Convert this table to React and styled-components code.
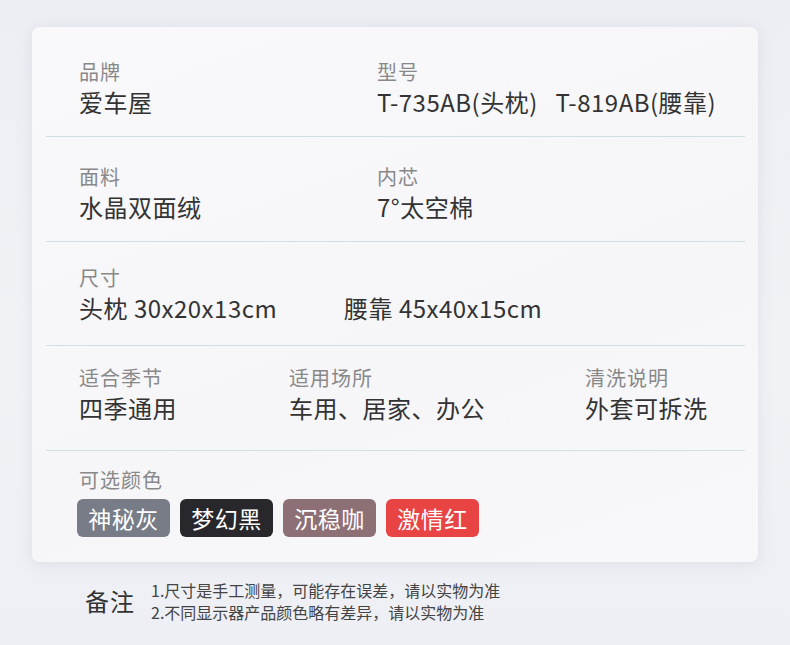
import React from 'react';
import styled, { createGlobalStyle } from 'styled-components';

const GlobalStyle = createGlobalStyle`
  html, body {
    margin: 0;
    padding: 0;
    width: 790px;
    height: 645px;
    overflow: hidden;
    background: linear-gradient(180deg, #eceef3 0%, #f1f2f6 55%, #eeeff4 100%);
    font-family: "Noto Sans CJK SC", "Noto Sans", sans-serif;
  }
`;

const Page = styled.div`
  width: 790px;
  height: 645px;
  padding-top: 27px;
  box-sizing: border-box;
`;

const Card = styled.div`
  margin: 0 32px;
  width: 726px;
  background: linear-gradient(160deg, #f9f9fb 0%, #f6f6f9 60%, #f8f8fb 100%);
  border-radius: 8px;
  box-shadow: 0 2px 14px rgba(160, 165, 185, 0.22);
  overflow: hidden;
`;

const Row = styled.div`
  margin: 0 13px 0 14px;
  padding: ${p => p.$pt}px 0 ${p => p.$pb}px 33px;
  border-bottom: ${p => (p.$last ? 'none' : '1px solid #d3dde4')};
  display: grid;
  grid-template-columns: ${p => p.$cols};
`;

const Cell = styled.div`
  display: flex;
  flex-direction: column;
`;

const Label = styled.div`
  font-size: 20px;
  line-height: 28px;
  color: #888888;
  letter-spacing: 1px;
  white-space: nowrap;
`;

const Value = styled.div`
  font-size: 24px;
  line-height: 32px;
  color: #333333;
  letter-spacing: 0.5px;
  white-space: pre;
`;

const Swatches = styled.div`
  display: flex;
  gap: 10px;
  margin-top: 5px;
  margin-left: -2px;
`;

const Swatch = styled.div`
  width: 93px;
  height: 38px;
  border-radius: 6px;
  background: ${p => p.$bg};
  color: #ffffff;
  font-size: 23px;
  line-height: 38px;
  letter-spacing: 0.5px;
  text-align: center;
`;

const Footer = styled.div`
  display: flex;
  align-items: center;
  gap: 16px;
  padding: 17px 0 0 85px;
`;

const NoteTitle = styled.div`
  font-size: 24px;
  line-height: 30px;
  color: #333333;
  letter-spacing: 1px;
`;

const NoteLines = styled.div`
  display: flex;
  flex-direction: column;
`;

const NoteLine = styled.div`
  font-size: 16px;
  line-height: 22px;
  color: #444444;
  white-space: nowrap;
`;

const rows = [
  {
    pt: 31, pb: 18, cols: '298px 1fr',
    cells: [['品牌', '爱车屋'], ['型号', 'T-735AB(头枕)   T-819AB(腰靠)']],
  },
  {
    pt: 26, pb: 18, cols: '298px 1fr',
    cells: [['面料', '水晶双面绒'], ['内芯', '7°太空棉']],
  },
  {
    pt: 22, pb: 21, cols: '265px 1fr',
    cells: [['尺寸', '头枕 30x20x13cm'], ['\u00a0', '腰靠 45x40x15cm']],
  },
  {
    pt: 18, pb: 26, cols: '210px 296px 1fr',
    cells: [['适合季节', '四季通用'], ['适用场所', '车用、居家、办公'], ['清洗说明', '外套可拆洗']],
  },
];

const colors = [
  { name: '神秘灰', bg: '#777c87' },
  { name: '梦幻黑', bg: '#28282c' },
  { name: '沉稳咖', bg: '#8d6f76' },
  { name: '激情红', bg: '#e84444' },
];

export default function App() {
  return (
    <>
      <GlobalStyle />
      <Page>
        <Card>
          {rows.map((r, i) => (
            <Row key={i} $pt={r.pt} $pb={r.pb} $cols={r.cols}>
              {r.cells.map(([label, value], j) => (
                <Cell key={j}>
                  <Label>{label}</Label>
                  <Value>{value}</Value>
                </Cell>
              ))}
            </Row>
          ))}
          <Row $pt={15} $pb={25} $cols="1fr" $last>
            <Cell>
              <Label>可选颜色</Label>
              <Swatches>
                {colors.map(c => (
                  <Swatch key={c.name} $bg={c.bg}>{c.name}</Swatch>
                ))}
              </Swatches>
            </Cell>
          </Row>
        </Card>
        <Footer>
          <NoteTitle>备注</NoteTitle>
          <NoteLines>
            <NoteLine>1.尺寸是手工测量，可能存在误差，请以实物为准</NoteLine>
            <NoteLine>2.不同显示器产品颜色略有差异，请以实物为准</NoteLine>
          </NoteLines>
        </Footer>
      </Page>
    </>
  );
}
